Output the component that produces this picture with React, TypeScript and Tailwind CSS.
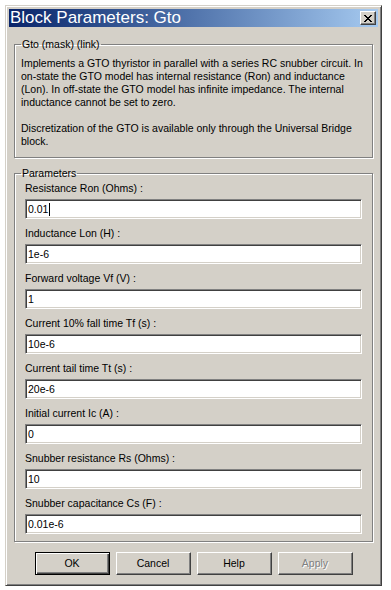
import React from 'react';

const params = [
  { label: 'Resistance Ron (Ohms) :', value: '0.01', focused: true },
  { label: 'Inductance Lon (H) :', value: '1e-6' },
  { label: 'Forward voltage Vf (V) :', value: '1' },
  { label: 'Current 10% fall time Tf (s) :', value: '10e-6' },
  { label: 'Current tail time Tt (s) :', value: '20e-6' },
  { label: 'Initial current Ic (A) :', value: '0' },
  { label: 'Snubber resistance Rs (Ohms) :', value: '10' },
  { label: 'Snubber capacitance Cs (F) :', value: '0.01e-6' },
];

const description = [
  'Implements a GTO thyristor in parallel with a series RC snubber circuit. In',
  'on-state the GTO model has internal resistance (Ron) and inductance',
  '(Lon). In off-state the GTO model has infinite impedance. The internal',
  'inductance cannot be set to zero.',
  '',
  'Discretization of the GTO is available only through the Universal Bridge',
  'block.',
];

// pixel X used by the classic close button
const xPixels = ['##....##', '.##..##.', '..####..', '...##...', '..####..', '.##..##.', '##....##'];

const CloseGlyph = () => (
  <svg width="8" height="7" viewBox="0 0 8 7" shapeRendering="crispEdges">
    {xPixels.map((row, y) =>
      row.split('').map((c, x) => (c === '#' ? <rect key={`${x}-${y}`} x={x} y={y} width="1" height="1" fill="#000" /> : null))
    )}
  </svg>
);

const TextField = ({ value, focused }: { value: string; focused?: boolean }) => (
  <div className="h-[20px] w-full bg-white flex items-center pl-[2px] border border-t-[#808080] border-l-[#808080] border-b-white border-r-white shadow-[inset_1px_1px_0_#404040,inset_-1px_-1px_0_#d4d0c8]">
    <span className="text-[10.5px] leading-[13px] text-black whitespace-nowrap">{value}</span>
    {focused && <span className="w-px h-[13px] bg-black ml-px" />}
  </div>
);

const Button = ({ label, isDefault, disabled }: { label: string; isDefault?: boolean; disabled?: boolean }) => (
  <div
    className={`w-[75px] h-[23px] flex items-center justify-center text-[10.5px] leading-[13px] ${
      isDefault
        ? 'border border-black shadow-[inset_1px_1px_0_#fff,inset_-1px_-1px_0_#404040,inset_-2px_-2px_0_#808080]'
        : 'border border-t-white border-l-white border-b-[#404040] border-r-[#404040] shadow-[inset_-1px_-1px_0_#808080]'
    } ${disabled ? 'text-[#808080] [text-shadow:1px_1px_0_#fff]' : 'text-black'}`}
  >
    {label}
  </div>
);

export default function App() {
  return (
    <div className="w-[391px] h-[590px] bg-white pl-[5px] pt-[5px] font-['Liberation_Sans',Arial,sans-serif]">
      <div className="w-[377px] h-[581px] bg-[#d4d0c8] p-[3px] flex flex-col border border-t-[#d4d0c8] border-l-[#d4d0c8] border-b-[#404040] border-r-[#404040] shadow-[inset_1px_1px_0_#fff,inset_-1px_-1px_0_#808080]">
        {/* title bar */}
        <div className="h-[18px] flex items-center justify-between pr-[2px] bg-gradient-to-r from-[#0a246a] to-[#a6caf0]">
          <span className="text-white text-[17px] leading-[18px] pl-[1px] whitespace-nowrap">Block Parameters: Gto</span>
          <div className="w-[16px] h-[14px] bg-[#d4d0c8] flex items-center justify-center border border-t-white border-l-white border-b-[#404040] border-r-[#404040] shadow-[inset_-1px_-1px_0_#808080]">
            <CloseGlyph />
          </div>
        </div>

        <div className="px-[5px] mt-[11px] flex flex-col">
          <fieldset className="border border-[#808080] shadow-[inset_1px_1px_0_#fff,1px_1px_0_#fff] px-[6px] pb-[9px]">
            <legend className="px-[1px] text-[10.5px] leading-[13px] text-black">Gto (mask) (link)</legend>
            <div className="pt-[6px] text-[10.5px] leading-[13px] text-black">
              {description.map((line, i) => (
                <div key={i} className="h-[13px] whitespace-nowrap">{line}</div>
              ))}
            </div>
          </fieldset>

          <fieldset className="mt-[9px] border border-[#808080] shadow-[inset_1px_1px_0_#fff,1px_1px_0_#fff] px-[6px] pb-[7px]">
            <legend className="px-[1px] text-[10.5px] leading-[13px] text-black">Parameters</legend>
            <div className="pt-[2px] px-[4px] flex flex-col gap-[8px]">
              {params.map((p) => (
                <div key={p.label} className="flex flex-col gap-[4px]">
                  <span className="text-[10.5px] leading-[13px] text-black whitespace-nowrap">{p.label}</span>
                  <TextField value={p.value} focused={p.focused} />
                </div>
              ))}
            </div>
          </fieldset>

          <div className="mt-[10px] flex justify-center gap-[6px]">
            <Button label="OK" isDefault />
            <Button label="Cancel" />
            <Button label="Help" />
            <Button label="Apply" disabled />
          </div>
        </div>
      </div>
    </div>
  );
}
